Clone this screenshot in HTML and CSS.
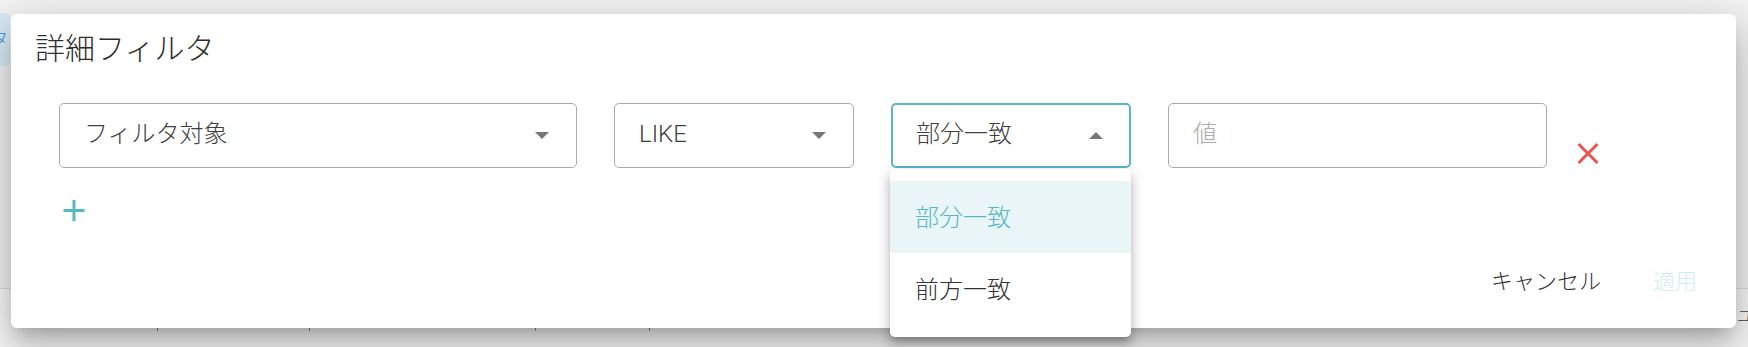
FILE: index.html
```html
<!DOCTYPE html>
<html lang="ja">
<head>
<meta charset="utf-8">
<title>詳細フィルタ</title>
<link rel="stylesheet" href="styles.css">
</head>
<body>
<div class="app">
  <div class="bg-tab"><span class="bg-tab-text">タ</span></div>
  <div class="bg-table">
    <div class="bg-head">
      <div class="bg-cell c1"></div>
      <div class="bg-cell c2"></div>
      <div class="bg-cell c3"></div>
      <div class="bg-cell c4"></div>
    </div>
    <div class="bg-row"><span class="bg-yu">ユーザー</span></div>
  </div>
</div>

<div class="dialog">
  <div class="dialog-title">詳細フィルタ</div>
  <div class="dialog-body">
    <div class="filter-row">
      <div class="field select w-target">
        <span class="field-text">フィルタ対象</span>
        <span class="arrow down"></span>
      </div>
      <div class="field select w-op">
        <span class="field-text">LIKE</span>
        <span class="arrow down"></span>
      </div>
      <div class="select-wrap w-op">
        <div class="field select focused">
          <span class="field-text">部分一致</span>
          <span class="arrow up"></span>
        </div>
        <div class="menu">
          <div class="menu-item active">部分一致</div>
          <div class="menu-item">前方一致</div>
        </div>
      </div>
      <div class="field input w-value">
        <span class="placeholder">値</span>
      </div>
      <button class="icon-btn remove" aria-label="削除">
        <svg width="22" height="21" viewBox="5 5 14 14"><path d="M19 6.41L17.59 5 12 10.59 6.41 5 5 6.41 10.59 12 5 17.59 6.41 19 12 13.41 17.59 19 19 17.59 13.41 12z"/></svg>
      </button>
    </div>
    <button class="icon-btn add" aria-label="追加">
      <svg width="22" height="21" viewBox="5 5 14 14"><path d="M19 13h-6v6h-2v-6H5v-2h6V5h2v6h6v2z"/></svg>
    </button>
  </div>
  <div class="dialog-actions">
    <button class="text-btn cancel">キャンセル</button>
    <button class="text-btn apply" disabled>適用</button>
  </div>
</div>
</body>
</html>
```

FILE: styles.css
```css
* { box-sizing: border-box; }

html, body {
  margin: 0;
  padding: 0;
}

body {
  width: 1748px;
  height: 347px;
  overflow: hidden;
  background: #f3f3f3;
  font-family: "Roboto", "Noto Sans CJK JP", sans-serif;
  font-weight: 300;
  color: #333;
  position: relative;
}

/* background page under the overlay */
.app {
  height: 347px;
  display: flex;
  flex-direction: column;
}

.bg-tab {
  margin-top: 13px;
  width: 10px;
  height: 53px;
  background: #d9ebf6;
  border-radius: 0 5px 5px 0;
  overflow: hidden;
  display: flex;
  align-items: center;
}

.bg-tab-text {
  margin-left: -9px;
  color: #2a93d8;
  font-size: 17px;
  line-height: 1;
}

.bg-table {
  margin-top: 222px;
  border-top: 1px solid #dedede;
  background: #f8f8f8;
  flex: 1;
}

.bg-head {
  display: flex;
  height: 42px;
}

.bg-cell {
  border-right: 1px solid #8a8a8a;
  height: 42px;
}

.c1 { width: 158px; }
.c2 { width: 152px; }
.c3 { width: 226px; }
.c4 { width: 114px; }

.bg-row {
  margin-top: -22px;
  padding-left: 1737px;
  white-space: nowrap;
  overflow: hidden;
  font-size: 16px;
  line-height: 16px;
  color: #444;
}

/* dialog */
.dialog {
  position: absolute;
  left: 11px;
  top: 14px;
  width: 1725px;
  height: 314px;
  background: #fff;
  border-radius: 6px;
  box-shadow: 0 11px 15px -7px rgba(0,0,0,.2), 0 24px 38px 3px rgba(0,0,0,.14), 0 9px 46px 8px rgba(0,0,0,.12);
  display: flex;
  flex-direction: column;
}

.dialog-title {
  padding: 12px 24px 0;
  font-size: 30px;
  line-height: 45px;
  color: #2e2e2e;
}

.dialog-body {
  padding: 32px 0 0 48px;
  display: flex;
  flex-direction: column;
  align-items: flex-start;
}

.filter-row {
  display: flex;
  align-items: flex-start;
}

.field {
  height: 65px;
  border: 1px solid #ababab;
  border-radius: 5px;
  display: flex;
  align-items: center;
  padding: 0 27px 0 24px;
  font-size: 24px;
  color: #404040;
  margin-right: 37px;
  background: #fff;
}

.field-text {
  flex: 1;
  line-height: 1;
  margin-top: -3px;
}

.w-target { width: 518px; }
.w-op { width: 240px; }
.w-value { width: 379px; margin-right: 30px; }

.select-wrap {
  position: relative;
  margin-right: 37px;
}

.select-wrap .field {
  margin-right: 0;
  width: 100%;
}

.field.focused {
  border: 2px solid #58b7c4;
  padding: 0 26px 0 23px;
}

.arrow {
  width: 0;
  height: 0;
  border-left: 7.5px solid transparent;
  border-right: 7.5px solid transparent;
}

.arrow.down { border-top: 7px solid #767676; }
.arrow.up { border-bottom: 7px solid #767676; }

.placeholder {
  color: #ababab;
  line-height: 1;
  margin-top: -3px;
}

.menu {
  position: absolute;
  top: 66px;
  left: -1px;
  width: 241px;
  padding: 12px 0;
  background: #fff;
  border-radius: 5px;
  box-shadow: 0 5px 5px -3px rgba(0,0,0,.2), 0 8px 10px 1px rgba(0,0,0,.14), 0 3px 14px 2px rgba(0,0,0,.12);
  z-index: 2;
}

.menu-item {
  height: 72px;
  display: flex;
  align-items: center;
  padding: 0 25px 4px;
  font-size: 24px;
  color: #333;
}

.menu-item.active {
  background: #eaf5f7;
  color: #58b7c4;
}

.icon-btn {
  border: 0;
  background: none;
  padding: 0;
  display: block;
  cursor: pointer;
}

.icon-btn svg { display: block; }

.remove {
  margin-top: 40px;
}

.remove svg { fill: #ef5350; }

.add {
  margin-top: 32px;
  margin-left: 4px;
}

.add svg { fill: #58b7c4; }

.dialog-actions {
  margin-top: auto;
  display: flex;
  justify-content: flex-end;
  padding: 0 21px 24px;
}

.text-btn {
  height: 44px;
  padding: 0 18px;
  border: 0;
  background: none;
  font-family: "Roboto", "Noto Sans CJK JP", sans-serif;
  font-weight: 300;
  font-size: 22px;
  line-height: 44px;
  color: #333;
}

.text-btn + .text-btn { margin-left: 16px; }

.text-btn.apply { color: #d2edf1; }
```
